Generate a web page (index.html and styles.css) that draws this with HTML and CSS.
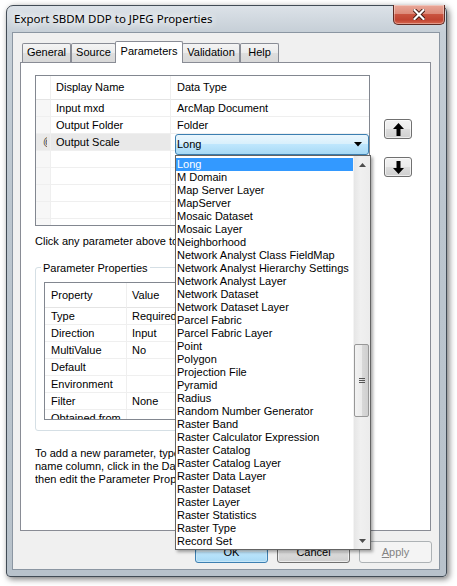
FILE: index.html
```html
<!DOCTYPE html>
<html>
<head>
<meta charset="utf-8">
<link rel="stylesheet" href="styles.css">
</head>
<body>
<div class="window">
  <div class="titlebar">
    <span class="title">Export SBDM DDP to JPEG Properties</span>
    <div class="close">
      <svg width="12" height="11" viewBox="0 0 12 11"><path d="M1.5 1 L10.5 10 M10.5 1 L1.5 10" stroke="#3b1610" stroke-width="4" stroke-linecap="square"/><path d="M1.5 1 L10.5 10 M10.5 1 L1.5 10" stroke="#fff" stroke-width="2.2" stroke-linecap="square"/></svg>
    </div>
  </div>
  <div class="client">
    <div class="tabs">
      <div class="tab t-general">General</div>
      <div class="tab t-source">Source</div>
      <div class="tab t-params active">Parameters</div>
      <div class="tab t-valid">Validation</div>
      <div class="tab t-help">Help</div>
    </div>
    <div class="tabpage">
      <div class="top-row">
        <div class="grid">
          <div class="row head">
            <div class="c0"></div>
            <div class="c1">Display Name</div>
            <div class="c2">Data Type</div>
          </div>
          <div class="row">
            <div class="c0"></div>
            <div class="c1">Input mxd</div>
            <div class="c2">ArcMap Document</div>
          </div>
          <div class="row">
            <div class="c0"></div>
            <div class="c1">Output Folder</div>
            <div class="c2">Folder</div>
          </div>
          <div class="row current">
            <div class="c0"><span class="rowicon">@</span></div>
            <div class="c1">Output Scale</div>
            <div class="c2">
              <div class="combo">
                <span>Long</span>
                <svg width="8" height="5" viewBox="0 0 8 5"><path d="M0 0 H8 L4 4.5 Z" fill="#000"/></svg>
              </div>
            </div>
          </div>
          <div class="row"><div class="c0"></div><div class="c1"></div><div class="c2"></div></div>
          <div class="row"><div class="c0"></div><div class="c1"></div><div class="c2"></div></div>
          <div class="row"><div class="c0"></div><div class="c1"></div><div class="c2"></div></div>
          <div class="row"><div class="c0"></div><div class="c1"></div><div class="c2"></div></div>
          <div class="row"><div class="c0"></div><div class="c1"></div><div class="c2"></div></div>
        </div>
        <div class="movebtns">
          <div class="btn move"><svg width="11" height="13" viewBox="0 0 11 13"><path d="M5.5 0 L11 6 H7.5 V13 H3.5 V6 H0 Z" fill="#000"/></svg></div>
          <div class="btn move"><svg width="11" height="13" viewBox="0 0 11 13"><path d="M5.5 13 L11 7 H7.5 V0 H3.5 V7 H0 Z" fill="#000"/></svg></div>
        </div>
      </div>
      <p class="hint">Click any parameter above to see its properties below.</p>
      <div class="group">
        <div class="group-title">Parameter Properties</div>
        <div class="propgrid">
          <div class="prow phead"><div class="p1">Property</div><div class="p2">Value</div></div>
          <div class="prow"><div class="p1">Type</div><div class="p2">Required</div></div>
          <div class="prow"><div class="p1">Direction</div><div class="p2">Input</div></div>
          <div class="prow"><div class="p1">MultiValue</div><div class="p2">No</div></div>
          <div class="prow"><div class="p1">Default</div><div class="p2"></div></div>
          <div class="prow"><div class="p1">Environment</div><div class="p2"></div></div>
          <div class="prow"><div class="p1">Filter</div><div class="p2">None</div></div>
          <div class="prow"><div class="p1">Obtained from</div><div class="p2"></div></div>
        </div>
      </div>
      <div class="help">
        <div>To add a new parameter, type the name into an empty row</div>
        <div>name column, click in the Data Type column to choose</div>
        <div>then edit the Parameter Properties.</div>
      </div>
    </div>
    <div class="buttons">
      <div class="btn dlg default">OK</div>
      <div class="btn dlg">Cancel</div>
      <div class="btn dlg disabled"><u>A</u>pply</div>
    </div>
  </div>
</div>

<div class="dropdown">
  <div class="items">
    <div class="item sel">Long</div>
    <div class="item">M Domain</div>
    <div class="item">Map Server Layer</div>
    <div class="item">MapServer</div>
    <div class="item">Mosaic Dataset</div>
    <div class="item">Mosaic Layer</div>
    <div class="item">Neighborhood</div>
    <div class="item">Network Analyst Class FieldMap</div>
    <div class="item">Network Analyst Hierarchy Settings</div>
    <div class="item">Network Analyst Layer</div>
    <div class="item">Network Dataset</div>
    <div class="item">Network Dataset Layer</div>
    <div class="item">Parcel Fabric</div>
    <div class="item">Parcel Fabric Layer</div>
    <div class="item">Point</div>
    <div class="item">Polygon</div>
    <div class="item">Projection File</div>
    <div class="item">Pyramid</div>
    <div class="item">Radius</div>
    <div class="item">Random Number Generator</div>
    <div class="item">Raster Band</div>
    <div class="item">Raster Calculator Expression</div>
    <div class="item">Raster Catalog</div>
    <div class="item">Raster Catalog Layer</div>
    <div class="item">Raster Data Layer</div>
    <div class="item">Raster Dataset</div>
    <div class="item">Raster Layer</div>
    <div class="item">Raster Statistics</div>
    <div class="item">Raster Type</div>
    <div class="item">Record Set</div>
  </div>
  <div class="scrollbar">
    <div class="sarrow"><svg width="7" height="4" viewBox="0 0 7 4"><path d="M3.5 0 L7 4 H0 Z" fill="#4d4d4d"/></svg></div>
    <div class="strack">
      <div class="thumb"><span></span><span></span><span></span></div>
    </div>
    <div class="sarrow"><svg width="7" height="4" viewBox="0 0 7 4"><path d="M0 0 H7 L3.5 4 Z" fill="#4d4d4d"/></svg></div>
  </div>
</div>
</body>
</html>
```

FILE: styles.css
```css
* { box-sizing: border-box; }
html, body { margin: 0; padding: 0; }
body {
  width: 457px;
  height: 586px;
  overflow: hidden;
  background: #fff;
  font-family: "Liberation Sans", Arial, sans-serif;
  font-size: 11px;
  color: #000;
}

.window {
  margin: 5px 0 0 6px;
  width: 441px;
  height: 572px;
  border: 1px solid #414b55;
  border-radius: 7px 7px 4px 4px;
  background: linear-gradient(180deg, #dce2e8 0, #c6cfd7 26px, #bcc6cf 200px, #b8c2cb 100%);
  box-shadow: 2px 2px 6px rgba(0,0,0,0.55);
  display: flex;
  flex-direction: column;
}

.titlebar {
  height: 26px;
  flex: none;
  display: flex;
  justify-content: space-between;
  align-items: flex-start;
  padding-left: 7px;
}
.title {
  font-family: "Noto Sans", "Open Sans", sans-serif;
  font-size: 11.5px;
  line-height: 26px;
  color: #000;
  text-shadow: 0 0 6px #fff, 0 0 10px #fff, 0 0 14px #fff;
}
.close {
  margin-top: -1px;
  margin-right: 1px;
  width: 52px;
  height: 20px;
  border: 1px solid #5e2a22;
  border-top: none;
  border-radius: 0 0 5px 5px;
  background: linear-gradient(180deg, #eaa899 0%, #dd8b7a 45%, #c9533f 50%, #c14431 78%, #d6674f 100%);
  box-shadow: inset 0 0 0 1px rgba(255,255,255,0.35);
  display: flex;
  align-items: center;
  justify-content: center;
}

.client {
  flex: 1;
  margin: 0 6px 6px 5px;
  border: 1px solid #8b96a2;
  background: #f0f0f0;
  padding: 8px 8px 0 7px;
  display: flex;
  flex-direction: column;
}

.tabs {
  height: 21px;
  flex: none;
  display: flex;
  align-items: flex-end;
  padding-left: 2px;
  position: relative;
  z-index: 2;
}
.tab {
  height: 19px;
  line-height: 17px;
  text-align: center;
  border: 1px solid #898c95;
  border-bottom: none;
  border-radius: 2px 2px 0 0;
  background: linear-gradient(180deg, #f4f4f4 0%, #ebebeb 50%, #dedede 51%, #d8d8d8 100%);
}
.t-general { width: 49px; }
.t-source { width: 45px; }
.t-params { width: 68px; margin: 0 -1px; }
.t-valid { width: 58px; }
.t-help { width: 39px; }
.tab.active {
  height: 22px;
  margin-bottom: -1px;
  background: #fff;
  line-height: 18px;
  position: relative;
  z-index: 3;
}

.tabpage {
  height: 469px;
  flex: none;
  border: 1px solid #898c95;
  background: #fff;
  padding: 12px 0 0 14px;
}

.top-row {
  display: flex;
  align-items: flex-start;
}
.grid {
  width: 335px;
  height: 151px;
  border: 1px solid #828790;
  overflow: hidden;
  background: #fff;
}
.row {
  display: grid;
  grid-template-columns: 15px 120px 1fr;
  height: 17px;
}
.row > div {
  border-right: 1px solid #efefef;
  border-bottom: 1px solid #efefef;
  line-height: 16px;
  white-space: nowrap;
  overflow: hidden;
}
.row .c1 { padding-left: 5px; }
.row .c2 { padding-left: 6px; border-right: none; overflow: visible; position: relative; }
.row .c0 { background: #f7f7f7; }
.row.head { height: 24px; }
.row.head > div { line-height: 22px; background: #fff; border-bottom-color: #e4e4e4; }
.row.current .c0, .row.current .c1 { background: #e9e9e9; }
.rowicon {
  display: block;
  width: 4px;
  margin-left: 7px;
  overflow: hidden;
  font-size: 10px;
  color: #333;
}
.combo {
  position: absolute;
  top: 0;
  left: 4px;
  right: 0;
  height: 21px;
  border: 1px solid #3c7fb1;
  border-radius: 3px;
  background: linear-gradient(180deg, #eaf6fd 0%, #d9f0fc 45%, #bee6fd 50%, #a7d9f5 100%);
  display: flex;
  align-items: center;
  justify-content: space-between;
  padding: 0 6px 0 1px;
  line-height: 19px;
  z-index: 1;
}

.movebtns {
  margin-left: 14px;
  padding-top: 44px;
  display: flex;
  flex-direction: column;
  gap: 18px;
}
.btn {
  border: 1px solid #707070;
  border-radius: 3px;
  background: linear-gradient(180deg, #f2f2f2 0%, #ebebeb 50%, #dddddd 51%, #cfcfcf 100%);
  box-shadow: inset 0 0 0 1px rgba(255,255,255,0.6);
  display: flex;
  align-items: center;
  justify-content: center;
}
.move { width: 28px; height: 20px; }

.hint {
  margin: 8px 0 0 0;
  line-height: 14px;
  white-space: nowrap;
}

.group {
  margin-top: 19px;
  width: 336px;
  border: 1px solid #d5dfe5;
  border-radius: 3px;
  padding: 0 8px 10px 8px;
}
.group-title {
  width: max-content;
  margin: -7px 0 0 -3px;
  padding: 0 2px;
  background: #fff;
  line-height: 14px;
}
.propgrid {
  margin-top: 7px;
  height: 138px;
  border: 1px solid #828790;
  overflow: hidden;
}
.prow {
  display: grid;
  grid-template-columns: 82px 1fr;
  height: 17px;
}
.prow > div {
  border-bottom: 1px solid #efefef;
  line-height: 16px;
  white-space: nowrap;
}
.prow .p1 { padding-left: 6px; border-right: 1px solid #efefef; }
.prow .p2 { padding-left: 5px; }
.prow.phead { height: 25px; }
.prow.phead > div { line-height: 24px; border-bottom-color: #e4e4e4; }

.help {
  margin-top: 16px;
  line-height: 13px;
  white-space: nowrap;
  width: 330px;
  overflow: hidden;
}

.buttons {
  margin-top: 10px;
  margin-right: -1px;
  display: flex;
  justify-content: flex-end;
  gap: 9px;
}
.dlg {
  width: 73px;
  height: 22px;
  line-height: 20px;
}
.dlg.default {
  border-color: #3c7fb1;
  background: linear-gradient(180deg, #eaf6fd 0%, #d9f0fc 50%, #bee6fd 51%, #a7d9f5 100%);
  box-shadow: inset 0 0 0 1px #c6e6f8;
}
.dlg.disabled {
  border-color: #adb2b5;
  background: #f4f4f4;
  color: #838383;
  box-shadow: none;
}

.dropdown {
  position: absolute;
  left: 175px;
  top: 155px;
  width: 196px;
  height: 395px;
  border: 1px solid #646464;
  background: #fff;
  box-shadow: 2px 2px 3px rgba(0,0,0,0.35);
  display: flex;
  z-index: 10;
}
.items {
  flex: 1;
  padding-top: 2px;
}
.item {
  height: 13px;
  line-height: 13px;
  padding-left: 1px;
  white-space: nowrap;
}
.item.sel {
  background: #3399ff;
  color: #fff;
}
.scrollbar {
  width: 17px;
  background: linear-gradient(90deg, #e6e6e6 0, #f0f0f0 40%, #ececec 100%);
  border-left: 1px solid #f4f4f4;
  display: flex;
  flex-direction: column;
}
.sarrow {
  height: 17px;
  display: flex;
  align-items: center;
  justify-content: center;
}
.strack {
  flex: 1;
  position: relative;
}
.thumb {
  position: absolute;
  left: 0;
  top: 171px;
  width: 15px;
  height: 73px;
  border: 1px solid #979797;
  border-radius: 2px;
  background: linear-gradient(90deg, #f2f2f2 0%, #ebebeb 50%, #d9d9d9 51%, #cfcfcf 100%);
  display: flex;
  flex-direction: column;
  align-items: center;
  justify-content: center;
  gap: 1px;
}
.thumb span {
  display: block;
  width: 6px;
  height: 1px;
  background: #555;
}
```
